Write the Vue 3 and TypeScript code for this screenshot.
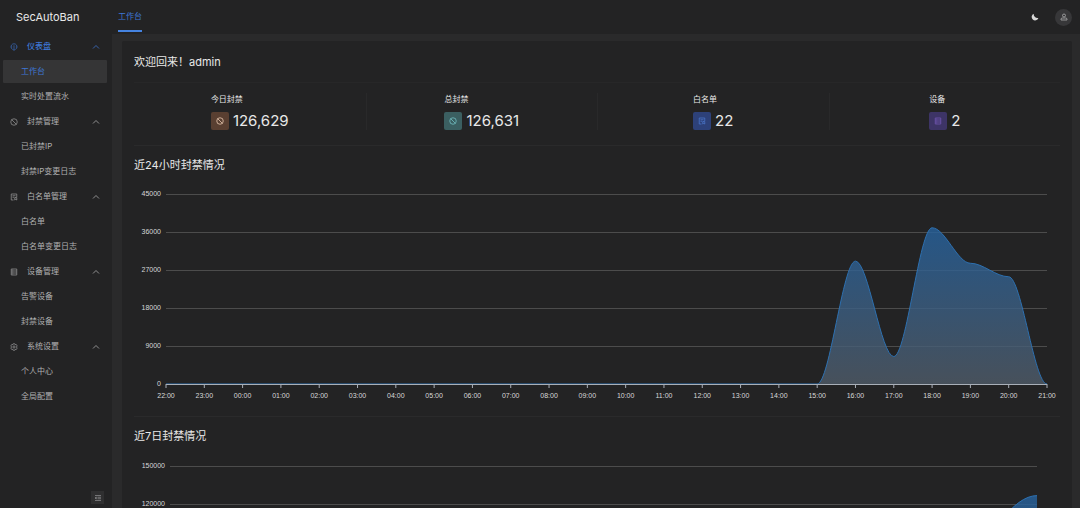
<script setup lang="ts">
import { computed, onBeforeUnmount, onMounted, ref } from 'vue'

interface MenuGroup {
  title: string
  icon: string
  items: string[]
}

interface ChartConfig {
  title: string
  labels: string[]
  values: number[]
  max: number
  ticks: number[]
  top: number
  left: number
  right: number
}

const groups: MenuGroup[] = [
  { title: '仪表盘', icon: 'dashboard', items: ['工作台', '实时处置流水'] },
  { title: '封禁管理', icon: 'stop', items: ['已封禁IP', '封禁IP变更日志'] },
  { title: '白名单管理', icon: 'bookmark', items: ['白名单', '白名单变更日志'] },
  { title: '设备管理', icon: 'storage', items: ['告警设备', '封禁设备'] },
  { title: '系统设置', icon: 'settings', items: ['个人中心', '全局配置'] },
]
const activeItem = ref('工作台')
const closed = ref<string[]>([])

function toggle(title: string) {
  closed.value = closed.value.includes(title)
    ? closed.value.filter((t) => t !== title)
    : [...closed.value, title]
}

const stats = [
  { label: '今日封禁', value: '126,629', icon: 'stop', tone: 'orange' },
  { label: '总封禁', value: '126,631', icon: 'stop', tone: 'cyan' },
  { label: '白名单', value: '22', icon: 'bookmark', tone: 'blue' },
  { label: '设备', value: '2', icon: 'storage', tone: 'purple' },
]

const hours = Array.from({ length: 24 }, (_, i) => `${String((22 + i) % 24).padStart(2, '0')}:00`)

const charts: ChartConfig[] = [
  {
    title: '近24小时封禁情况',
    labels: hours,
    values: [...Array(18).fill(0), 29100, 6500, 37000, 28600, 25400, 0],
    max: 45000,
    ticks: [45000, 36000, 27000, 18000, 9000, 0],
    top: 20,
    left: 32,
    right: 13,
  },
  {
    title: '近7日封禁情况',
    labels: [],
    values: [0, 0, 0, 0, 0, 2, 126629],
    max: 150000,
    ticks: [150000, 120000],
    top: 21,
    left: 36,
    right: 23,
  },
]

const plotHeight = 190
const body = ref<HTMLElement | null>(null)
const width = ref(926)
let observer: ResizeObserver | undefined

onMounted(() => {
  if (!body.value) return
  width.value = body.value.clientWidth
  observer = new ResizeObserver(() => {
    if (body.value) width.value = body.value.clientWidth
  })
  observer.observe(body.value)
})
onBeforeUnmount(() => observer?.disconnect())

const plots = computed(() =>
  charts.map((c) => {
    const bottom = c.top + plotHeight
    const end = width.value - c.right
    const gap = (end - c.left) / (c.values.length - 1)
    const points = c.values.map((v, i) => ({
      x: c.left + gap * i,
      y: bottom - (v / c.max) * plotHeight,
    }))
    // Level tangents at every point keep the curve from overshooting its values.
    const reach = gap / 3
    const line = points
      .map((p, i) => {
        if (i === 0) return `M${p.x} ${p.y}`
        const prev = points[i - 1]
        return `C${prev.x + reach} ${prev.y} ${p.x - reach} ${p.y} ${p.x} ${p.y}`
      })
      .join('')
    return {
      ...c,
      bottom,
      end,
      points,
      line,
      area: `${line}V${bottom}H${c.left}Z`,
      marks: c.ticks.map((value) => ({ value, y: bottom - (value / c.max) * plotHeight })),
      peak: Math.min(...points.map((p) => p.y)),
    }
  }),
)
</script>

<template>
  <svg class="sprite" aria-hidden="true">
    <symbol id="i-dashboard" viewBox="0 0 16 16">
      <path d="M5.500 13A6 6 0 1 1 10.500 13M2 8h2.500M11.500 8H14M8 4.500V14M6 14h4" />
    </symbol>
    <symbol id="i-stop" viewBox="0 0 16 16">
      <circle cx="8" cy="8" r="6.5" />
      <path d="M3.500 3.500l9 9" />
    </symbol>
    <symbol id="i-bookmark" viewBox="0 0 16 16">
      <path d="M13.500 8V2h-11v12H7M5 5.500h6M5 8.500h3M9.500 9h4v5l-2-1.500-2 1.500z" />
    </symbol>
    <symbol id="i-storage" viewBox="0 0 16 16">
      <path d="M2.500 2h11v12h-11zM2.500 6h11M2.500 10h11M4.500 4h2M4.500 8h2M4.500 12h2" />
    </symbol>
    <symbol id="i-settings" viewBox="0 0 16 16">
      <path d="M6.400 1.500h3.200l.6 1.700 2.300-.3 1.700 2.800L13 8l1.200 2.300-1.700 2.800-2.300-.3-.6 1.700H6.400l-.6-1.700-2.300.3-1.700-2.800L3 8 1.800 5.700l1.700-2.800 2.300.3z" />
      <circle cx="8" cy="8" r="2.200" />
    </symbol>
    <symbol id="i-up" viewBox="0 0 16 16"><path d="M2 11l6-6 6 6" /></symbol>
    <symbol id="i-fold" viewBox="0 0 16 16">
      <path d="M2 3h12M7 6.500h7M7 9.500h7M2 13h12M4.500 6L2 8l2.500 2z" />
    </symbol>
    <symbol id="i-user" viewBox="0 0 16 16">
      <circle cx="8" cy="5" r="3" />
      <path d="M2 14v-1.500q0-2.500 2.500-2.500h7q2.500 0 2.500 2.500V14z" />
    </symbol>
  </svg>

  <div class="app">
    <header class="header">
      <div class="brand">SecAutoBan</div>
      <nav class="tabs" aria-label="标签页">
        <a href="#" class="tab">工作台</a>
      </nav>
      <div class="tools">
        <button type="button" class="round" aria-label="深色模式">
          <svg class="moon" viewBox="0 0 16 16"><path d="M5.500 1.500C4.800 6.500 8.500 10.800 14.800 10A6.900 6.900 0 1 1 5.500 1.500z" /></svg>
        </button>
        <button type="button" class="round avatar" aria-label="用户">
          <svg class="icon"><use href="#i-user" /></svg>
        </button>
      </div>
    </header>

    <aside class="side">
      <nav class="menu" aria-label="主菜单">
        <template v-for="g in groups" :key="g.title">
          <button
            type="button"
            class="group"
            :class="{ current: g.items.includes(activeItem) }"
            :aria-expanded="!closed.includes(g.title)"
            @click="toggle(g.title)"
          >
            <svg class="icon"><use :href="`#i-${g.icon}`" /></svg>
            <span class="name">{{ g.title }}</span>
            <svg class="arrow"><use href="#i-up" /></svg>
          </button>
          <template v-if="!closed.includes(g.title)">
            <a
              v-for="item in g.items"
              :key="item"
              href="#"
              class="item"
              :class="{ active: item === activeItem }"
              @click.prevent="activeItem = item"
            >{{ item }}</a>
          </template>
        </template>
      </nav>
      <button type="button" class="fold" aria-label="收起菜单">
        <svg class="icon"><use href="#i-fold" /></svg>
      </button>
    </aside>

    <main class="content">
      <div class="card">
        <div ref="body">
          <h1 class="title">欢迎回来！admin</h1>
          <section class="stats">
            <div v-for="s in stats" :key="s.label" class="stat">
              <div>
                <div class="label">{{ s.label }}</div>
                <div class="figure">
                  <span class="badge" :class="s.tone">
                    <svg class="icon"><use :href="`#i-${s.icon}`" /></svg>
                  </span>
                  <span class="value">{{ s.value }}</span>
                </div>
              </div>
            </div>
          </section>

          <section v-for="(p, n) in plots" :key="p.title" class="panel">
            <h2 class="title">{{ p.title }}</h2>
            <svg class="chart" role="img" :aria-label="p.title">
              <defs>
                <linearGradient
                  :id="`fill-${n}`"
                  gradientUnits="userSpaceOnUse"
                  x1="0"
                  x2="0"
                  :y1="p.peak"
                  :y2="p.bottom"
                >
                  <stop offset="0" stop-color="#2663a0" />
                  <stop offset="1" stop-color="#505c69" />
                </linearGradient>
              </defs>
              <g v-for="t in p.marks" :key="t.value">
                <line v-if="t.value" class="grid" :x1="p.left" :x2="p.end" :y1="t.y + 0.5" :y2="t.y + 0.5" />
                <text class="y-label" :x="p.left - 5" :y="t.y + 2">{{ t.value }}</text>
              </g>
              <path class="area" :d="p.area" :fill="`url(#fill-${n})`" />
              <path class="line" :d="p.line" />
              <line class="axis" :x1="p.left" :x2="p.end" :y1="p.bottom + 0.5" :y2="p.bottom + 0.5" />
              <g v-for="(label, i) in p.labels" :key="label">
                <line class="axis" :x1="p.points[i].x" :x2="p.points[i].x" :y1="p.bottom" :y2="p.bottom + 4" />
                <text class="x-label" :x="p.points[i].x" :y="p.bottom + 14">{{ label }}</text>
              </g>
            </svg>
          </section>
        </div>
      </div>
    </main>
  </div>
</template>

<style>
body {
  background: #232324;
}
</style>

<style scoped>
.sprite {
  display: none;
}

.app {
  display: grid;
  grid-template: 34px minmax(0, 1fr) / 112px minmax(0, 1fr);
  height: 100vh;
  overflow: hidden;
  background: #232324;
  color: #e8e8e8;
  font: 8px/12px Inter, "Noto Sans CJK SC", sans-serif;
}

button {
  display: flex;
  align-items: center;
  padding: 0;
  border: 0;
  background: none;
  color: inherit;
  font: inherit;
  cursor: pointer;
}

a {
  color: inherit;
  text-decoration: none;
}

.icon,
.arrow {
  width: 8px;
  height: 8px;
  flex: none;
  fill: none;
  stroke: currentColor;
  stroke-width: 1.5;
}

.header {
  grid-column: 1 / -1;
  display: flex;
  align-items: center;
}

.brand {
  width: 102px;
  padding-left: 16px;
  font-size: 11px;
  line-height: 16px;
}

.tabs {
  flex: 1;
  align-self: stretch;
  display: flex;
}

.tab {
  box-sizing: border-box;
  height: 32px;
  padding-top: 10px;
  border-bottom: 2px solid #4583e0;
  color: #3e77d4;
}

.tools {
  display: flex;
  gap: 12px;
  padding-right: 8px;
}

.round {
  width: 17px;
  height: 17px;
  justify-content: center;
  border-radius: 50%;
}

.avatar {
  background: #373739;
  color: #b4b4b5;
}

.moon {
  width: 8px;
  height: 8px;
  fill: #d8d8d8;
}

.side {
  display: flex;
  flex-direction: column;
  justify-content: space-between;
  min-height: 0;
}

.menu {
  display: flex;
  flex-direction: column;
  gap: 2px;
  padding: 1px 5px 0 3px;
  color: #b0b0b1;
}

.group,
.item {
  height: 23px;
  line-height: 23px;
}

.group {
  padding: 0 7px;
  gap: 9px;
  text-align: left;
}

.group .icon {
  opacity: 0.8;
}

.name {
  flex: 1;
}

.current {
  color: #3e77d4;
}

.current .name {
  font-weight: 500;
}

.item {
  padding-left: 18px;
  border-radius: 1px;
}

.active {
  background: #353536;
  color: #3e77d4;
}

.fold {
  width: 13px;
  height: 13px;
  margin: 0 8px 4px auto;
  justify-content: center;
  background: #2f2f30;
  color: #8c8c8d;
}

.content {
  padding: 7px 8px 0 10px;
  overflow: auto;
  scrollbar-width: none;
  background: #2a2a2b;
}

.card {
  padding: 12px;
  border-radius: 2px;
  background: #232324;
}

.title {
  margin: 0;
  font-size: 11px;
  font-weight: 400;
  line-height: 18px;
}

.stats {
  display: grid;
  grid-template-columns: repeat(4, 1fr);
  margin-top: 11px;
  padding: 10px 0 15px;
  border-top: 1px solid #272728;
}

.stat {
  display: flex;
  justify-content: center;
}

.stat + .stat {
  border-left: 1px solid #29292a;
}

.figure {
  display: flex;
  align-items: center;
  gap: 4px;
  margin-top: 7px;
}

.badge {
  display: flex;
  align-items: center;
  justify-content: center;
  width: 18px;
  height: 18px;
  border-radius: 2px;
}

.orange {
  background: #593f31;
  color: #f0d0b8;
}

.cyan {
  background: #3b5f61;
  color: #76c6c8;
}

.blue {
  background: #2d4179;
  color: #4c78cc;
}

.purple {
  background: #3d3466;
  color: #7458b4;
}

.value {
  font-size: 15px;
  line-height: 18px;
}

.panel {
  padding-top: 10px;
  border-top: 1px solid #2a2a2b;
}

.chart {
  display: block;
  width: 100%;
  height: 242px;
}

.grid {
  stroke: #4c4c4c;
}

.axis {
  stroke: #a9afb8;
}

.area {
  opacity: 0.8;
}

.line {
  fill: none;
  stroke: #2d70b0;
}

.y-label,
.x-label {
  fill: #d8d8d8;
  font-family: "Liberation Sans", sans-serif;
  font-size: 7px;
}

.y-label {
  text-anchor: end;
}

.x-label {
  text-anchor: middle;
}
</style>
